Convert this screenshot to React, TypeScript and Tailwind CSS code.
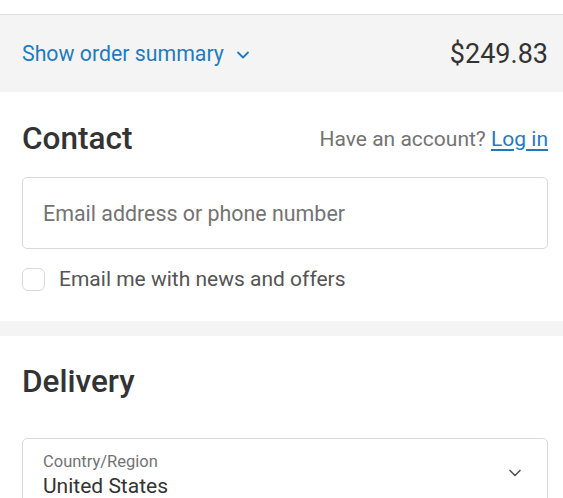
import { ChevronDown } from "lucide-react";

export default function App() {
  return (
    <div className="min-h-screen bg-white text-[#333333]" style={{ fontFamily: "Roboto, 'Liberation Sans', sans-serif" }}>
      <div className="h-[14px] bg-white" />

      {/* Order summary toggle */}
      <div className="flex h-[78px] items-center justify-between border-t border-[#dedede] bg-[#f4f4f4] pl-[22px] pr-[15px]">
        <button className="flex items-center gap-[9px] text-[21.3px] leading-[28px] text-[#1f7bc1]">
          Show order summary
          <ChevronDown size={20} strokeWidth={2.2} className="mt-[2px]" />
        </button>
        <span className="text-[27px] leading-[32px] text-[#333333]">$249.83</span>
      </div>

      {/* Contact */}
      <section className="pl-[22px] pr-[15px] pt-[28px] pb-[30px]">
        <div className="flex items-center justify-between">
          <h2 className="text-[31.5px] font-medium leading-[37px] text-[#333333]">Contact</h2>
          <p className="text-[21px] leading-[28px] text-[#737373]">
            Have an account?{" "}
            <a href="#" className="text-[#1f7bc1] underline underline-offset-[3px]">Log in</a>
          </p>
        </div>
        <div className="mt-[20px] flex h-[72px] items-center rounded-[5px] border border-[#d9d9d9] px-[20px] pt-[2px]">
          <input
            placeholder="Email address or phone number"
            className="w-full bg-transparent text-[21.4px] text-[#333333] outline-none placeholder:text-[#737373]"
          />
        </div>
        <label className="mt-[18px] flex h-[24px] items-center gap-[14px]">
          <span className="h-[23px] w-[23px] rounded-[6px] border border-[#d9d9d9]" />
          <span className="text-[21px] leading-[24px] text-[#545454]">Email me with news and offers</span>
        </label>
      </section>

      <div className="h-[15px] bg-[#f4f4f4]" />

      {/* Delivery */}
      <section className="pl-[22px] pr-[15px] pt-[28px]">
        <h2 className="text-[31.5px] font-medium leading-[36px] text-[#333333]">Delivery</h2>
        <div className="mt-[38px] flex h-[72px] items-start justify-between rounded-t-[5px] border border-[#d9d9d9] pl-[20px] pr-[22px] pt-[12px]">
          <div className="flex flex-col">
            <span className="text-[16.5px] leading-[22px] text-[#737373]">Country/Region</span>
            <span className="text-[21px] leading-[26px] text-[#333333]">United States</span>
          </div>
          <ChevronDown size={20} strokeWidth={2} className="mt-[12px] text-[#545454]" />
        </div>
      </section>
    </div>
  );
}
